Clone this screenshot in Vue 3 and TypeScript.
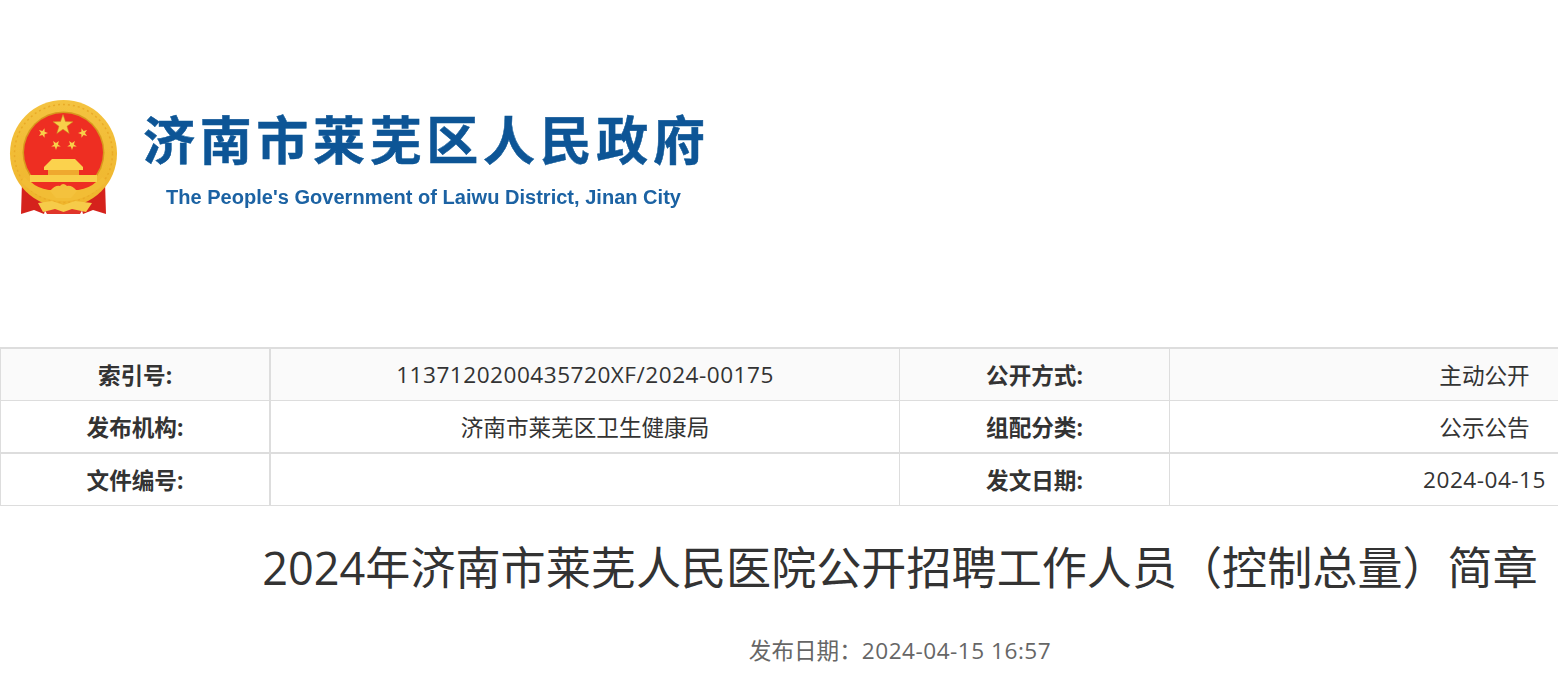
<script setup lang="ts">
const rows = [
  { label1: '索引号:', value1: '1137120200435720XF/2024-00175', label2: '公开方式:', value2: '主动公开' },
  { label1: '发布机构:', value1: '济南市莱芜区卫生健康局', label2: '组配分类:', value2: '公示公告' },
  { label1: '文件编号:', value1: '', label2: '发文日期:', value2: '2024-04-15' },
]
const smallStars = [
  [43, 133, 0.3],
  [83, 133, -0.3],
  [56, 145, 0.6],
  [72, 145, -0.6],
]
// five point star centred on 0,0 with radius 1
const starPoints = Array.from({ length: 10 }, (_, i) => {
  const r = i % 2 === 0 ? 1 : 0.4
  const a = (Math.PI / 5) * i - Math.PI / 2
  return `${(r * Math.cos(a)).toFixed(3)},${(r * Math.sin(a)).toFixed(3)}`
}).join(' ')
// digits in the reference run a little wider than the font here
const isNumeric = (v: string) => /\d{4}/.test(v)
</script>

<template>
  <div class="page">
    <header class="head">
      <svg class="logo" width="720" height="130" viewBox="0 95 720 130">
        <defs>
          <filter id="soft" x="-5%" y="-5%" width="110%" height="110%">
            <feGaussianBlur stdDeviation="0.6" />
          </filter>
          <filter id="softer" x="-2%" y="-10%" width="104%" height="120%">
            <feGaussianBlur stdDeviation="0.35" />
          </filter>
          <linearGradient id="gold" x1="0" y1="0" x2="0" y2="1">
            <stop offset="0" stop-color="#f4c340" />
            <stop offset="1" stop-color="#efb52c" />
          </linearGradient>
        </defs>
        <g filter="url(#soft)">
          <path d="M22 182 L42 190 L47 203 L44 214 L34 210 L21 214 Z" fill="#d5231e" />
          <path d="M105 182 L85 190 L80 203 L83 214 L93 210 L106 214 Z" fill="#d5231e" />
          <path d="M44 209 L83 209 L80 214 L47 214 Z" fill="#e0352a" />
          <circle cx="63.5" cy="153.5" r="53.5" fill="url(#gold)" />
          <circle cx="63.5" cy="153.5" r="49" fill="none" stroke="#e9aa28" stroke-width="1.5" stroke-dasharray="2 3" />
          <circle cx="63.5" cy="152.5" r="41" fill="#d9981e" />
          <circle cx="63.5" cy="152.5" r="39.5" fill="#ee2f24" />
          <path d="M24 177 Q36 188 50 190 L77 190 Q91 188 103 177 L106 182 Q88 201 63.5 201 Q39 201 21 182 Z" fill="#f2bd36" />
          <path d="M31 182 H96 Q90 188 78 190 H49 Q37 188 31 182 Z" fill="#ee2f24" />
          <polygon :points="starPoints" transform="translate(63 125) scale(10.5)" fill="#f8d04a" stroke="#c9901c" stroke-width="0.05" />
          <polygon
            v-for="(s, i) in smallStars"
            :key="i"
            :points="starPoints"
            :transform="`translate(${s[0]} ${s[1]}) rotate(${s[2] * 60}) scale(5)`"
            fill="#f8cf48"
          />
          <path d="M52 159 H75 L83 167 V170 H44 V167 Z" fill="#fbd24e" />
          <rect x="48" y="170" width="31" height="5" fill="#efa92e" />
          <rect x="30" y="175" width="67" height="7" fill="#f9cf4a" />
          <path d="M50 191 Q55 185 60 186 Q63 182 67 186 Q72 185 77 191 L71 198 H56 Z" fill="#f4c23c" />
          <path d="M38 203 L52 201 L63.5 205 L75 201 L92 203 L86 212 L72 209 L63.5 212 L55 209 L43 212 Z" fill="#f6cb49" />
        </g>
        <g filter="url(#softer)">
          <text class="logo-cn" x="143" y="160" textLength="562" lengthAdjust="spacing">济南市莱芜区人民政府</text>
          <text class="logo-en" x="166" y="204" textLength="515" lengthAdjust="spacingAndGlyphs">The People's Government of Laiwu District, Jinan City</text>
        </g>
      </svg>
    </header>

    <table class="info">
      <tbody>
        <tr v-for="(row, i) in rows" :key="i" :class="`row-${i}`">
          <th class="c1">{{ row.label1 }}</th>
          <td class="c2" :class="{ num: isNumeric(row.value1) }">{{ row.value1 }}</td>
          <th class="c3">{{ row.label2 }}</th>
          <td class="c4" :class="{ num: isNumeric(row.value2) }">{{ row.value2 }}</td>
        </tr>
      </tbody>
    </table>

    <h1 class="title">2024年济南市莱芜人民医院公开招聘工作人员（控制总量）简章</h1>
    <p class="date">发布日期：<span class="num">2024-04-15 16:57</span></p>
  </div>
</template>

<style>
html,
body {
  margin: 0;
  overflow: hidden;
  background: #fff;
}
</style>

<style scoped>
.page {
  width: 1800px;
  font-family: "Open Sans", "Noto Sans CJK SC", sans-serif;
  color: #333;
}

.head {
  height: 347px;
  padding-top: 95px;
  box-sizing: border-box;
}

.logo {
  display: block;
}

.logo-cn {
  font-family: "Noto Sans CJK SC", sans-serif;
  font-size: 52px;
  font-weight: 700;
  fill: #0a5596;
  stroke: #0a5596;
  stroke-width: 0.5px;
}

.logo-en {
  font-family: "Liberation Sans", sans-serif;
  font-size: 20px;
  font-weight: 700;
  fill: #1a62a3;
}

.info {
  width: 1800px;
  table-layout: fixed;
  border-collapse: separate;
  border-spacing: 0;
  border-top: 2px solid #ddd;
  font-size: 22.6px;
}

.info th,
.info td {
  padding: 0;
  text-align: center;
  height: 51px;
  border-bottom: 1px solid #ddd;
  border-right: 1px solid #ddd;
  box-sizing: border-box;
}

.info th {
  font-weight: 700;
}

.row-0 th,
.row-0 td {
  background: #fafafa;
  height: 52px;
}

.row-1 th,
.row-1 td {
  height: 53px;
  border-bottom-width: 2px;
}

.row-2 th,
.row-2 td {
  height: 52px;
}

.info .c1 {
  width: 271px;
  border-left: 1px solid #ddd;
  border-right-width: 2px;
}

.info .c2 {
  width: 629px;
}

.info .c3 {
  width: 270px;
}

.info .c4 {
  width: 630px;
}

.num {
  letter-spacing: 0.5px;
}

.title {
  margin: 26px 0 0;
  font-size: 45.1px;
  font-weight: 400;
  line-height: 72px;
  text-align: center;
}

.date {
  margin: 29px 0 0;
  font-size: 22.6px;
  line-height: 36px;
  text-align: center;
  color: #666;
}
</style>
